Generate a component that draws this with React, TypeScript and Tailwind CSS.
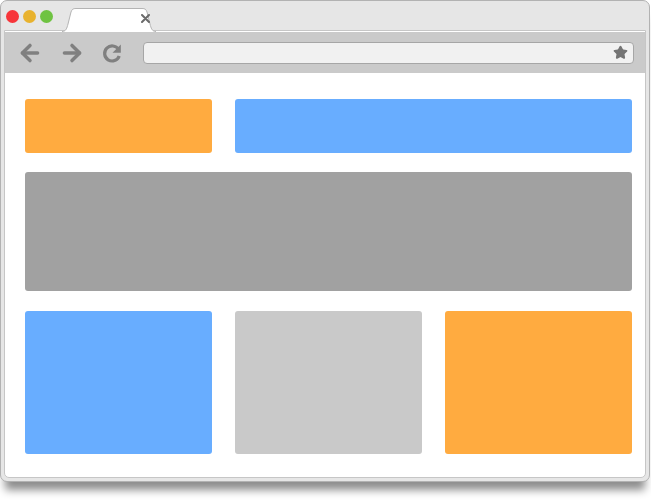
import { ArrowLeft, ArrowRight, Star } from "lucide-react"

function Tab() {
  return (
    <div className="relative ml-[9px] mt-[7px] h-[23px] w-[94px]">
      <svg width="94" height="24" viewBox="0 0 94 24" className="absolute left-0 top-0">
        <path
          d="M0 23.5 C4 23.5 5 20 6 16 L9 4 C10 1.2 11 0.5 14 0.5 L80 0.5 C83 0.5 84 1.2 85 4 L88 16 C89 20 90 23.5 94 23.5"
          fill="#ffffff"
          stroke="#b4b4b4"
          strokeWidth="1"
        />
      </svg>
      <svg width="9" height="9" viewBox="0 0 9 9" className="absolute left-[79px] top-[6px]">
        <path d="M1 1 L8 8 M8 1 L1 8" stroke="#6a6a6a" strokeWidth="2" strokeLinecap="round" />
      </svg>
    </div>
  )
}

function Reload() {
  return (
    <svg width="22" height="22" viewBox="0 0 22 22">
      <path
        d="M17.5 7.5 A7.5 7.5 0 1 0 18.2 14"
        fill="none"
        stroke="#808080"
        strokeWidth="3.2"
      />
      <path d="M19.8 2.5 L19.8 10.8 L11.5 10.8 Z" fill="#808080" />
    </svg>
  )
}

export default function App() {
  return (
    <div className="h-[500px] w-[651px] bg-white">
      <div className="flex h-[482px] w-[650px] flex-col rounded-[7px] border border-[#b2b2b2] bg-[#e6e6e6] px-[3px] pb-[3px] shadow-[0_13px_8px_-5px_rgba(0,0,0,0.45)]">
        {/* title bar */}
        <div className="flex h-[29px] shrink-0 items-start">
          <div className="mt-[9px] flex gap-[4px] pl-[2px]">
            <span className="h-[13px] w-[13px] rounded-full bg-[#f7353a]" />
            <span className="h-[13px] w-[13px] rounded-full bg-[#e8b22e]" />
            <span className="h-[13px] w-[13px] rounded-full bg-[#6fc342]" />
          </div>
          <Tab />
        </div>

        <div className="flex flex-1 flex-col overflow-hidden rounded-b-[5px] border border-[#c6c6c6] bg-white">
          {/* toolbar */}
          <div className="flex h-[42px] shrink-0 items-center border-t border-white bg-[#cacaca] pl-[12px] pr-[11px]">
            <ArrowLeft className="h-[26px] w-[26px] text-[#808080]" strokeWidth={3.2} />
            <ArrowRight className="ml-[16px] h-[26px] w-[26px] text-[#808080]" strokeWidth={3.2} />
            <div className="ml-[16px]">
              <Reload />
            </div>
            <div className="ml-[20px] flex h-[22px] flex-1 items-center justify-end rounded-[4px] border border-[#a6a6a6] bg-[#f1f1f1] pr-[5px]">
              <Star className="h-[15px] w-[15px] fill-[#747474] text-[#747474]" />
            </div>
          </div>

          {/* content */}
          <div className="flex flex-1 flex-col gap-[19px] pl-[20px] pr-[13px] pt-[26px]">
            <div className="flex h-[54px] gap-[23px]">
              <div className="w-[187px] rounded-[3px] bg-[#ffab40]" />
              <div className="flex-1 rounded-[3px] bg-[#68adff]" />
            </div>
            <div className="h-[119px] rounded-[3px] bg-[#a1a1a1]" />
            <div className="mt-[1px] grid h-[143px] grid-cols-3 gap-[23px]">
              <div className="rounded-[3px] bg-[#68adff]" />
              <div className="rounded-[3px] bg-[#c9c9c9]" />
              <div className="rounded-[3px] bg-[#ffab40]" />
            </div>
          </div>
        </div>
      </div>
    </div>
  )
}
